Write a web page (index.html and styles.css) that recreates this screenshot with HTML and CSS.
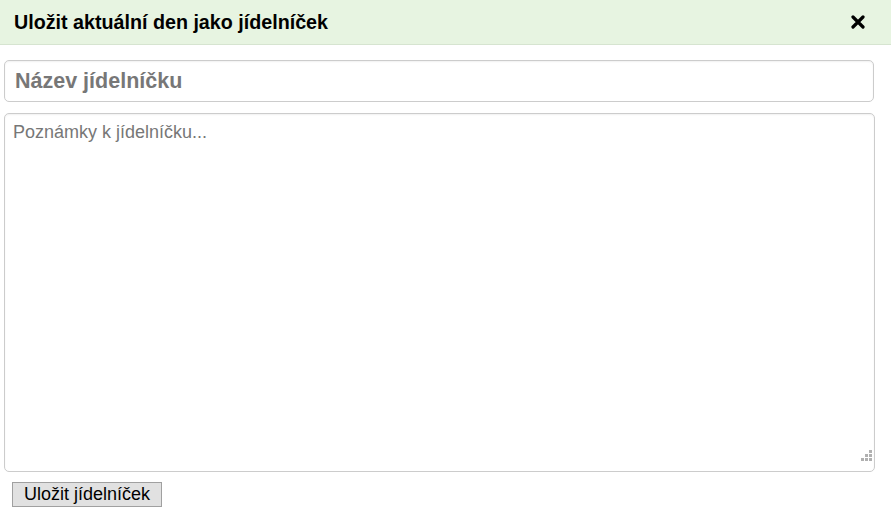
FILE: index.html
```html
<!DOCTYPE html>
<html lang="cs">
<head>
    <meta charset="UTF-8">
    <meta name="viewport" content="width=device-width, initial-scale=1.0">
    <title>Uložit jídelníček</title>
    <link rel="stylesheet" href="styles.css">
</head>
<body>
<div class="dialog-head">
    <h2 class="dialog-title">Uložit aktuální den jako jídelníček</h2>
    <span class="dialog-close" title="Zavřít">
        <svg width="14" height="14" viewBox="0 0 14 14">
            <path d="M2 2 L12 12 M12 2 L2 12" stroke="#000" stroke-width="3.2" stroke-linecap="round"/>
        </svg>
    </span>
</div>

<form class="save-form">
    <input type="text" class="menu-name" placeholder="Název jídelníčku">
    <div class="notes-wrap">
        <textarea class="menu-notes" placeholder="Poznámky k jídelníčku..."></textarea>
        <!-- grip drawn by hand, the native one looks different -->
        <span class="notes-grip"></span>
    </div>
    <div class="form-actions">
        <button type="button" class="save-btn">Uložit jídelníček</button>
    </div>
</form>
</body>
</html>
```

FILE: styles.css
```css
html {
  margin: 0px;
}
body {
  margin: 0px;
  width: 891px;
  font-family: "Liberation Sans", Arial, sans-serif;
  background-color: #ffffff;
}

.dialog-head {
  display: flex;
  align-items: center;
  justify-content: space-between;
  height: 44px;
  padding: 0 26px 0 14px;
  background-color: #e7f4e1;
  border-bottom: 1px solid #d6e4d0;
}
.dialog-title {
  margin: 0;
  font-size: 19.7px;
  font-weight: bold;
  color: #000000;
}
.dialog-close {
  display: flex;
  cursor: pointer;
}

.save-form {
  display: flex;
  flex-direction: column;
  align-items: flex-start;
  padding: 15px 0 0 4px;
}
.menu-name {
  box-sizing: border-box;
  width: 870px;
  height: 42px;
  padding: 0 10px;
  border: 1px solid #cccccc;
  border-radius: 5px;
  font-family: "Liberation Sans", Arial, sans-serif;
  font-size: 21.5px;
  font-weight: bold;
  box-shadow: inset 0px 1px 2px rgba(0, 0, 0, 0.06);
}
.menu-name::placeholder {
  color: #777777;
}
.notes-wrap {
  position: relative;
  margin-top: 11px;
}
.menu-notes {
  display: block;
  box-sizing: border-box;
  width: 871px;
  height: 359px;
  padding: 8px 8px;
  border: 1px solid #cccccc;
  border-radius: 5px;
  font-family: "Liberation Sans", Arial, sans-serif;
  font-size: 18px;
  resize: none;
  box-shadow: inset 0px 1px 2px rgba(0, 0, 0, 0.06);
}
.menu-notes::placeholder {
  color: #777777;
}
.notes-grip {
  position: absolute;
  right: 11px;
  bottom: 11px;
  width: 3px;
  height: 3px;
  background-color: #b0b0b0;
  box-shadow: 4px 0 #b0b0b0, 8px 0 #b0b0b0,
              4px -4px #b0b0b0, 8px -4px #b0b0b0,
              8px -8px #b0b0b0;
}
.form-actions {
  padding: 10px 0 0 8px;
}
.save-btn {
  height: 25px;
  width: 150px;
  padding: 0;
  border: 1px solid #a0a0a0;
  background-color: #e1e1e1;
  font-family: "Liberation Sans", Arial, sans-serif;
  font-size: 18px;
  color: #000000;
}
```
